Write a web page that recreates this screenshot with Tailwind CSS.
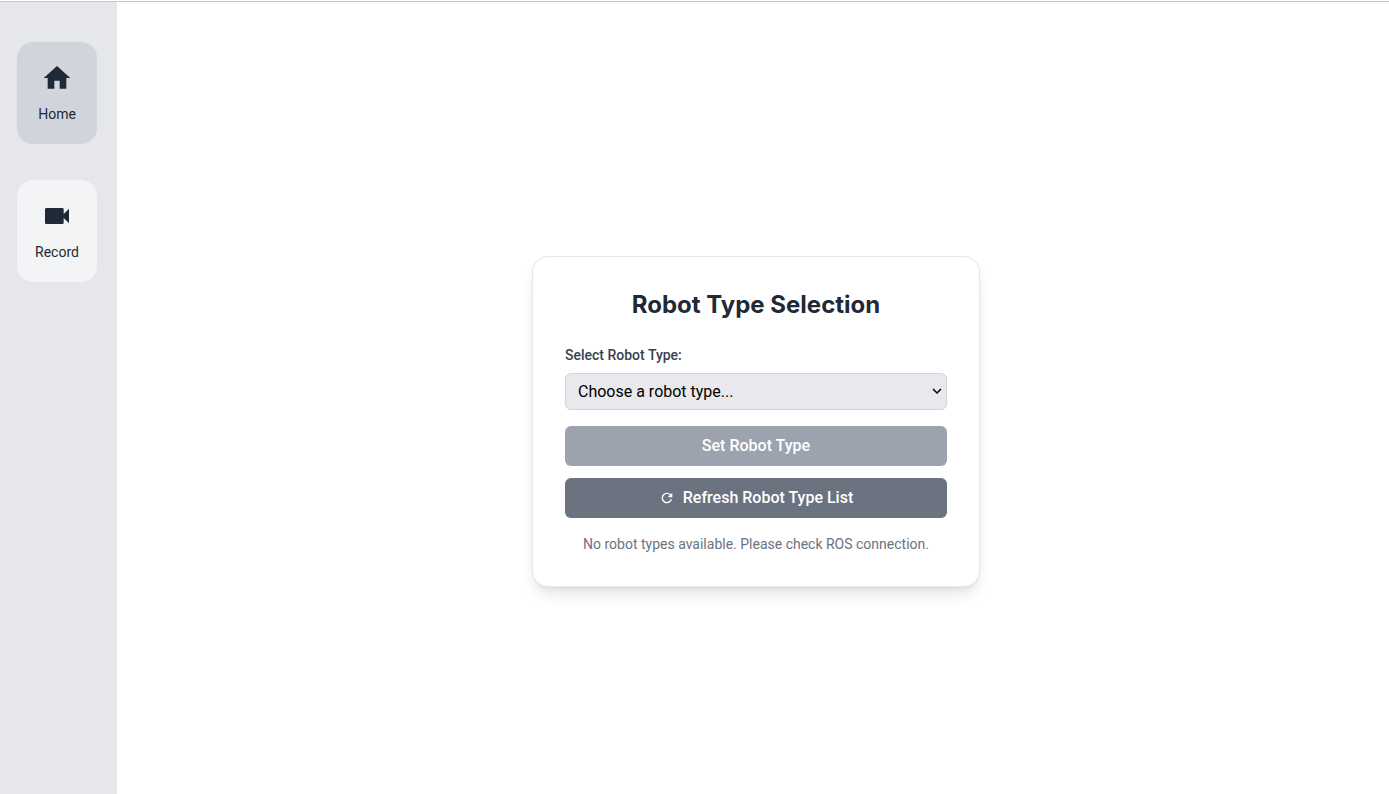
<!DOCTYPE html>
<html lang="en">
  <head>
    <meta charset="UTF-8" />
    <meta name="viewport" content="width=device-width, initial-scale=1.0" />
    <title>Robot Type Selection</title>
    <script src="https://cdn.jsdelivr.net/npm/@tailwindcss/browser@4"></script>
  </head>
  <body class="min-h-screen flex flex-col bg-white pt-px font-['Roboto',sans-serif]">
    <div class="flex-1 flex border-t border-[#c4c6c8]">
      <!-- Sidebar -->
      <nav class="w-[117px] shrink-0 flex flex-col gap-9 bg-[#e5e7eb] pt-10 pl-[17px]">
        <button id="homeBtn" type="button" class="w-20 flex flex-col items-center gap-2.5 py-5 rounded-2xl bg-[#d1d5db] text-[#1f2937] text-sm">
          <svg class="size-8" viewBox="0 0 24 24" fill="currentColor" aria-hidden="true">
            <path d="M10 20v-6h4v6h5v-8h3L12 3 2 12h3v8z" />
          </svg>
          Home
        </button>
        <button id="recordBtn" type="button" class="w-20 flex flex-col items-center gap-2.5 py-5 rounded-2xl bg-[#f3f4f6] text-[#1f2937] text-sm">
          <svg class="size-8" viewBox="0 0 24 24" fill="currentColor" aria-hidden="true">
            <path d="M17 10.5V7c0-.55-.45-1-1-1H4c-.55 0-1 .45-1 1v10c0 .55.45 1 1 1h12c.55 0 1-.45 1-1v-3.5l4 4v-11l-4 4z" />
          </svg>
          Record
        </button>
      </nav>

      <!-- Robot type card -->
      <main class="flex-1 flex items-center justify-center pt-[46px] pl-1.5">
        <div class="w-full max-w-md bg-white border border-[#e5e7eb] rounded-2xl shadow-lg p-8">
          <h1 class="font-['Inter',sans-serif] text-2xl font-bold text-center text-[#1f2937] mb-6">Robot Type Selection</h1>

          <label for="robotType" class="block text-sm font-medium text-[#374151] mb-2">Select Robot Type:</label>
          <div class="relative mb-4">
            <select id="robotType" class="block w-full appearance-none px-3 py-[7px] leading-[21px] border border-[#d1d5db] rounded-md bg-[#e9e9ed] text-black">
              <option value="">Choose a robot type...</option>
            </select>
            <svg class="absolute right-1 inset-y-0 my-auto size-3 pointer-events-none" viewBox="0 0 12 12" fill="none" stroke="black" stroke-width="1.5" aria-hidden="true">
              <path d="M2 4l4 4 4-4" />
            </svg>
          </div>

          <button id="setBtn" type="button" class="w-full py-2 mb-3 rounded-md bg-[#9ca3af] text-white font-medium">
            Set Robot Type
          </button>
          <button id="refreshBtn" type="button" class="w-full flex items-center justify-center gap-2 py-2 rounded-md bg-[#6b7280] text-white font-medium">
            <svg class="size-4" viewBox="0 0 24 24" fill="currentColor" aria-hidden="true">
              <path d="M17.65 6.35A7.958 7.958 0 0 0 12 4c-4.42 0-7.99 3.58-7.99 8s3.57 8 7.99 8c3.73 0 6.84-2.55 7.73-6h-2.08A5.99 5.99 0 0 1 12 18c-3.31 0-6-2.69-6-6s2.69-6 6-6c1.66 0 3.14.69 4.22 1.78L13 11h7V4l-2.35 2.35z" />
            </svg>
            Refresh Robot Type List
          </button>

          <p class="mt-4 text-sm text-center text-[#6b7280]">No robot types available. Please check ROS connection.</p>
        </div>
      </main>
    </div>
  </body>
</html>
